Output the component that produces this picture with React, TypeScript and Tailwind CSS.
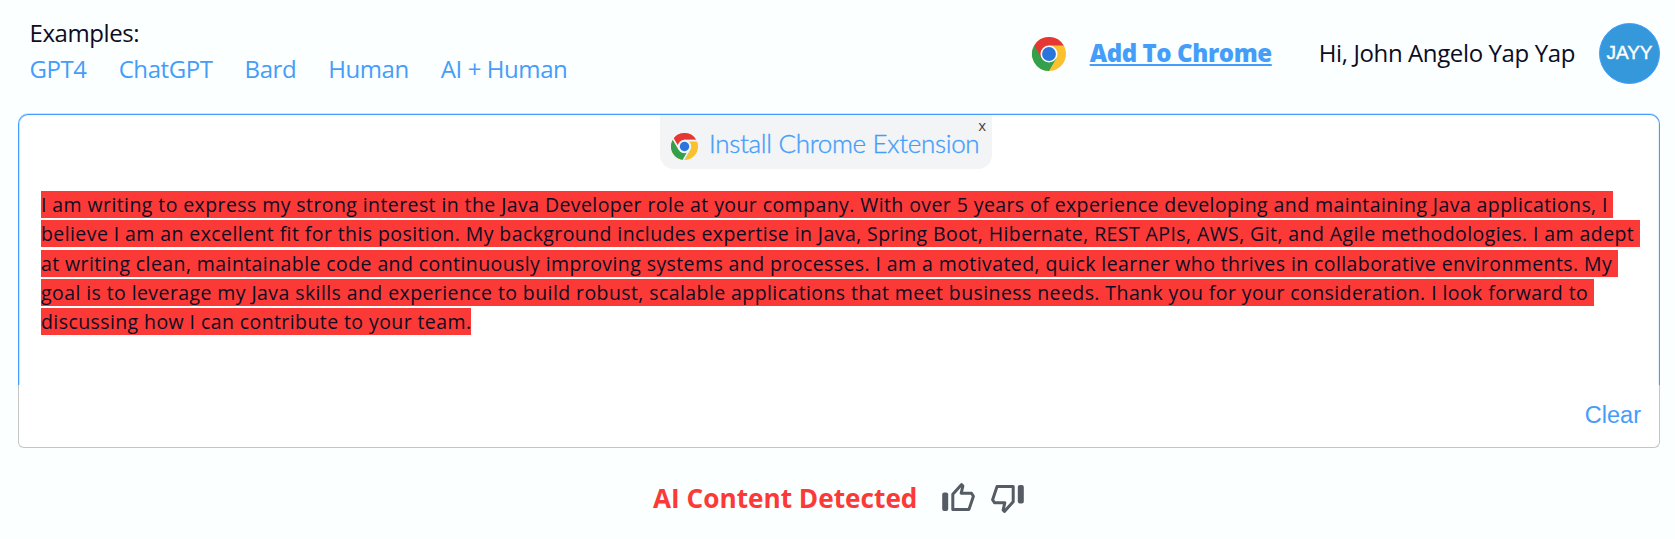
const examples = ['GPT4', 'ChatGPT', 'Bard', 'Human', 'AI + Human'];

const lines = [
  'I am writing to express my strong interest in the Java Developer role at your company. With over 5 years of experience developing and maintaining Java applications, I ',
  'believe I am an excellent fit for this position. My background includes expertise in Java, Spring Boot, Hibernate, REST APIs, AWS, Git, and Agile methodologies. I am adept ',
  'at writing clean, maintainable code and continuously improving systems and processes. I am a motivated, quick learner who thrives in collaborative environments. My ',
  'goal is to leverage my Java skills and experience to build robust, scalable applications that meet business needs. Thank you for your consideration. I look forward to ',
  'discussing how I can contribute to your team.',
];

function ChromeIcon({ className, spaced = false }: { className: string; spaced?: boolean }) {
  return (
    <svg viewBox="0 0 48 48" className={className}>
      <circle cx="24" cy="24" r="24" fill="#fbc02d" />
      <path d="M24 24 3.2 12A24 24 0 0 0 24 48l10.4-18z" fill="#34a04c" />
      <path d="M24 12h20.8A24 24 0 0 0 3.2 12l10.4 18L24 24z" fill="#e53733" />
      {spaced && (
        <path d="M24 13.5h23M14.9 29.3 3 9M33.1 29.3 22 48.5" stroke="#f3f4f6" strokeWidth="3" />
      )}
      <circle cx="24" cy="24" r="12" fill={spaced ? '#f3f4f6' : '#fff'} />
      <circle cx="24" cy="24" r={spaced ? 8.4 : 9.8} fill="#2a75dc" />
    </svg>
  );
}

function ThumbIcon({ className }: { className: string }) {
  return (
    <svg viewBox="0 0 33 30" className={className}>
      <rect x="0.2" y="10.5" width="6" height="18.5" rx="2" fill="#555c63" />
      <path
        d="M10.8 27.4V12.2L19.6 2.6L20.9 4L19.2 11.2H29.5L31.4 14.2L27 27.4Z"
        fill="none"
        stroke="#555c63"
        strokeWidth="3"
        strokeLinejoin="round"
      />
    </svg>
  );
}

export default function App() {
  return (
    <div className="h-[539px] w-[1675px] overflow-hidden bg-[#fbffff] font-['Open_Sans',sans-serif] text-[#0d0c22]">
      <header className="flex h-[114px] items-start justify-between pr-[15px] pl-[29.5px]">
        <div className="pt-[15px] text-[24px] leading-[36px] tracking-[-0.42px]">
          <p>Examples:</p>
          <nav className="flex gap-8 text-[#459dfa]">
            {examples.map((name) => (
              <a key={name} href="#">
                {name}
              </a>
            ))}
          </nav>
        </div>
        <div className="flex items-center pt-[23px]">
          <ChromeIcon className="size-[34px]" />
          <a
            href="#"
            className="ml-6 pb-px text-[24px] font-extrabold tracking-[-0.4px] text-[#459dfa] underline"
          >
            Add To Chrome
          </a>
          <span className="ml-[47px] pb-px text-[24px] tracking-[-0.38px]">Hi, John Angelo Yap Yap</span>
          <div className="ml-6 flex size-[61px] items-center justify-center rounded-full border border-[#459dfa] bg-[#3598db] font-['Liberation_Sans',sans-serif] text-[19px] text-white [-webkit-text-stroke:0.4px_#fff]">
            JAYY
          </div>
        </div>
      </header>

      <main className="mr-[15px] ml-[18px]">
        <section className="flex h-[271px] flex-col rounded-t-[10px] border border-b-0 border-[#459dfa] bg-white shadow-[0_-1px_0_0_#459dfa44,inset_1px_0_0_0_#459dfa44,inset_-1px_0_0_0_#459dfa22]">
          <div className="relative mr-[26px] flex h-[54px] w-[332px] items-center self-center rounded-b-[14px] bg-[#f3f4f6] pl-[11px]">
            <ChromeIcon spaced className="mt-2 size-[27px]" />
            <a
              href="#"
              className="ml-[11px] pt-px font-['Lato',sans-serif] text-[26px] leading-[30px] font-light tracking-[-0.32px] whitespace-nowrap text-[#459dfa] [-webkit-text-stroke:0.35px_#459dfa]"
            >
              Install Chrome Extension
            </a>
            <button className="absolute top-px right-[6px] text-[15px] leading-[18px] text-[#444]">x</button>
          </div>
          <p className="pt-[21px] pl-[22px] text-[19.5px] leading-[29.3px] tracking-[0.41px] whitespace-pre">
            {lines.map((line) => (
              <span key={line} className="block">
                <span className="bg-[#fb3a37]">{line}</span>
              </span>
            ))}
          </p>
        </section>
        <section className="flex h-[63px] items-start justify-end rounded-b-[6px] border border-t-0 border-[#c4c4c4] bg-white pt-[13px] pr-[18px]">
          <button className="font-['Liberation_Sans',sans-serif] text-[23.5px] text-[#459dfa]">Clear</button>
        </section>
      </main>

      <footer className="flex h-[91px] items-center pt-[9px] pl-[653px]">
        <p className="pt-[2px] text-[26.2px] font-bold text-[#fb3a37]">AI Content Detected</p>
        <ThumbIcon className="mb-[2px] ml-[25px] h-[30px] w-[33px]" />
        <ThumbIcon className="mt-px ml-4 h-[30px] w-[33px] rotate-180" />
      </footer>
    </div>
  );
}
